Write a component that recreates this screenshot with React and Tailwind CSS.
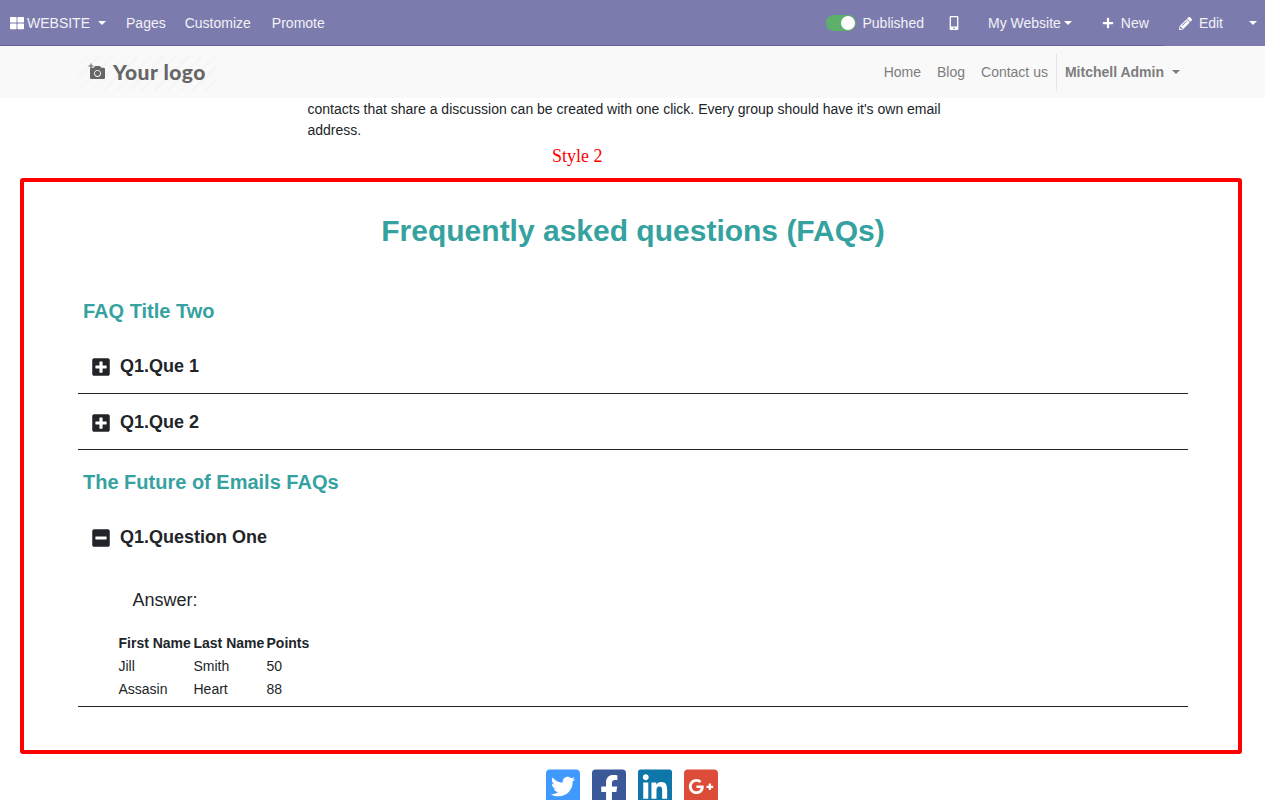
import React from "react";
import { FaThLarge, FaMobileAlt, FaPlus, FaPencilAlt, FaPlusSquare, FaMinusSquare, FaTwitterSquare, FaFacebookSquare, FaLinkedin, FaGooglePlusSquare, FaCamera } from "react-icons/fa";

function Caret({ className = "" }) {
  return <span className={"inline-block w-0 h-0 border-x-[4px] border-x-transparent border-t-[4px] border-t-current " + className} />;
}

function Question({ icon: Icon, text, className = "pt-[3px]" }) {
  return (
    <div className={"flex items-center pl-[14px] h-[55px] text-[18px] font-bold text-[#212529] " + className}>
      <Icon className="w-[18px] h-[20px] mr-[10px] mt-[2px] text-[#212529]" />
      <span>{text}</span>
    </div>
  );
}

function Social({ icon: Icon, color }) {
  return <Icon className={"w-[34px] h-[39px] " + color} />;
}

export default function App() {
  return (
    <div className="h-[800px] overflow-hidden bg-white text-[14px] leading-[21px] text-[#212529] font-['Liberation_Sans',Arial,sans-serif]">
      <header className="relative h-[46px] pt-[1px] bg-[#7c7bad] border-b border-[#64639a] flex items-center justify-between text-white/90 text-[14px]">
        <div className="flex items-center">
          <FaThLarge className="ml-[10px] w-[14px] h-[14px] text-white" />
          <span className="ml-[3px]">WEBSITE</span>
          <Caret className="ml-[8px] text-white" />
          <span className="ml-[20px]">Pages</span>
          <span className="ml-[19px]">Customize</span>
          <span className="ml-[21px]">Promote</span>
        </div>
        <div className="flex items-center">
          <div className="w-[30px] h-[16px] rounded-full bg-[#5cb06b] flex items-center justify-end pr-[1px]">
            <div className="w-[14px] h-[14px] rounded-full bg-white" />
          </div>
          <span className="ml-[6px]">Published</span>
          <FaMobileAlt className="ml-[25px] w-[10px] h-[14px] text-white" />
          <span className="ml-[29px]">My Website</span>
          <Caret className="ml-[3px] text-white" />
          <FaPlus className="ml-[30px] w-[12px] h-[12px] text-white" />
          <span className="ml-[7px]">New</span>
          <FaPencilAlt className="ml-[30px] w-[13px] h-[13px] text-white" />
          <span className="ml-[7px]">Edit</span>
          <Caret className="ml-[26px] mr-[8px] text-white" />
        </div>
        <div className="absolute right-0 bottom-[-1px] w-[101px] h-[1px] bg-[#7c7bad]" />
      </header>
      <nav className="h-[52px] bg-[#f9f9f9] flex items-center justify-between pl-[78px] pr-[85px]">
        <div className="w-[138px] h-[37px] flex items-center pl-[10px] bg-[repeating-linear-gradient(135deg,#f9f9f9_0px,#f9f9f9_7px,#f5f5f5_7px,#f5f5f5_9px)]">
          <span className="relative w-[17px] h-[15px] flex justify-end">
            <FaCamera className="w-[15px] h-[15px] text-[#666666]" />
            <FaPlus className="absolute left-0 top-[-2px] w-[6px] h-[6px] text-[#666666]" />
          </span>
          <span className="ml-[8px] mb-[2px] text-[21px] font-['Lato',sans-serif] font-black text-[#666666] tracking-[0.5px]">Your logo</span>
        </div>
        <div className="flex items-center text-[#7d7d7d]">
          <span>Home</span>
          <span className="ml-[16px]">Blog</span>
          <span className="ml-[16px]">Contact us</span>
          <div className="ml-[8px] h-[37px] border-l border-[#e6e6e6] pl-[8px] flex items-center font-bold">
            <span>Mitchell Admin</span>
            <Caret className="ml-[8px]" />
          </div>
        </div>
      </nav>
      <p className="ml-[307.5px] w-[660px] mt-[1px]">contacts that share a discussion can be created with one click. Every group should have it's own email address.</p>
      <div className="ml-[552px] mt-[3px] text-[18px] leading-[24px] text-[#ff0000] font-['Liberation_Serif',serif]">Style 2</div>
      <section className="mx-[20px] w-[1222px] h-[576px] mt-[10px] border-[4px] border-[#ff0000] rounded-[3px] pl-[54px] pr-[50px]">
        <h1 className="text-[30px] leading-[36px] font-bold text-[#35a29f] text-center mt-[31px]">Frequently asked questions (FAQs)</h1>
        <h2 className="text-[20px] leading-[24px] font-bold text-[#35a29f] mt-[50px] ml-[5px]">FAQ Title Two</h2>
        <div className="mt-[14px] pb-[1px] border-b border-[#212529]"><Question icon={FaPlusSquare} text="Q1.Que 1" /></div>
        <div className="border-b border-[#212529]"><Question icon={FaPlusSquare} text="Q1.Que 2" className="pt-[1px]" /></div>
        <h2 className="text-[20px] leading-[24px] font-bold text-[#35a29f] mt-[20px] ml-[5px]">The Future of Emails FAQs</h2>
        <div className="mt-[14px] border-b border-[#212529] pb-[5px]">
          <Question icon={FaMinusSquare} text="Q1.Question One" />
          <div className="pl-[54.5px] mt-[25px] text-[18px] leading-[24px]">Answer:</div>
          <table className="ml-[39.5px] mt-[20px] border-separate border-spacing-0">
            <thead>
              <tr className="h-[23px]">
                <th className="w-[75px] text-left font-bold pl-[1px] pr-0 whitespace-nowrap">First Name</th>
                <th className="w-[73px] text-left font-bold pl-[1px] pr-0 whitespace-nowrap">Last Name</th>
                <th className="text-left font-bold pl-[1px] pr-0">Points</th>
              </tr>
            </thead>
            <tbody>
              <tr className="h-[23px]"><td className="pl-[1px]">Jill</td><td className="pl-[1px]">Smith</td><td className="pl-[1px]">50</td></tr>
              <tr className="h-[23px]"><td className="pl-[1px]">Assasin</td><td className="pl-[1px]">Heart</td><td className="pl-[1px]">88</td></tr>
            </tbody>
          </table>
        </div>
      </section>
      <div className="mt-[13px] flex justify-center gap-[12px] pr-[2px]">
        <Social icon={FaTwitterSquare} color="text-[#4099ff]" />
        <Social icon={FaFacebookSquare} color="text-[#3b5998]" />
        <Social icon={FaLinkedin} color="text-[#0e76a8]" />
        <Social icon={FaGooglePlusSquare} color="text-[#dd4b39]" />
      </div>
    </div>
  );
}
